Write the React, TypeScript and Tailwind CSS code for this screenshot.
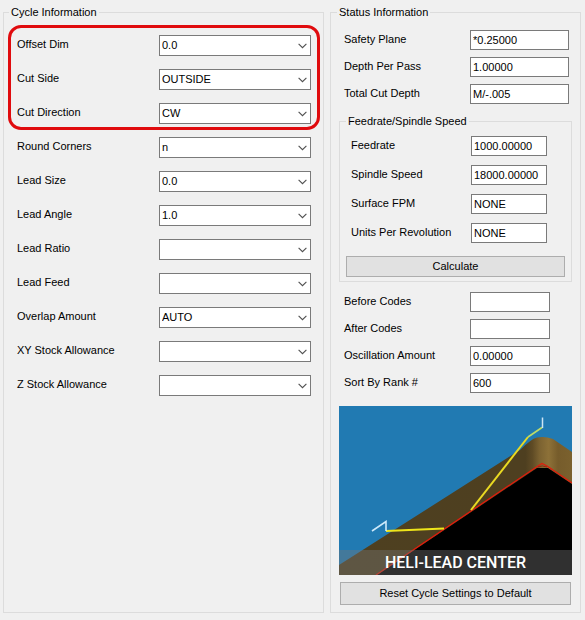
import { ReactNode, useId } from 'react'
import clsx from 'clsx'

type Field = { label: string; value: string }

const highlighted: Field[] = [
  { label: 'Offset Dim', value: '0.0' },
  { label: 'Cut Side', value: 'OUTSIDE' },
  { label: 'Cut Direction', value: 'CW' },
]

const cycleFields: Field[] = [
  { label: 'Round Corners', value: 'n' },
  { label: 'Lead Size', value: '0.0' },
  { label: 'Lead Angle', value: '1.0' },
  { label: 'Lead Ratio', value: '' },
  { label: 'Lead Feed', value: '' },
  { label: 'Overlap Amount', value: 'AUTO' },
  { label: 'XY Stock Allowance', value: '' },
  { label: 'Z Stock Allowance', value: '' },
]

const depthFields: Field[] = [
  { label: 'Safety Plane', value: '*0.25000' },
  { label: 'Depth Per Pass', value: '1.00000' },
  { label: 'Total Cut Depth', value: 'M/-.005' },
]

const speedFields: Field[] = [
  { label: 'Feedrate', value: '1000.00000' },
  { label: 'Spindle Speed', value: '18000.00000' },
  { label: 'Surface FPM', value: 'NONE' },
  { label: 'Units Per Revolution', value: 'NONE' },
]

const codeFields: Field[] = [
  { label: 'Before Codes', value: '' },
  { label: 'After Codes', value: '' },
  { label: 'Oscillation Amount', value: '0.00000' },
  { label: 'Sort By Rank #', value: '600' },
]

function GroupBox({ title, className, children }: { title: string; className?: string; children: ReactNode }) {
  return (
    <fieldset className={clsx('min-w-0 border border-[#dcdcdc]', className)}>
      <legend className="px-[2px] leading-[14px]">{title}</legend>
      {children}
    </fieldset>
  )
}

function SelectRow({ label, value }: Field) {
  const id = useId()
  return (
    <div className="flex items-start">
      <label htmlFor={id} className="w-[142px] shrink-0 leading-[18px]">
        {label}
      </label>
      <div className="relative min-w-0 flex-1">
        <select
          id={id}
          defaultValue={value}
          className="block h-[21px] w-full appearance-none border border-[#7a7a7a] bg-white pr-5 pb-[1px] pl-[2px] leading-[18px]"
        >
          <option value={value}>{value}</option>
        </select>
        <svg
          viewBox="0 0 9 6"
          className="pointer-events-none absolute top-2 right-1 h-[6px] w-[9px]"
          fill="none"
          stroke="#505050"
          strokeWidth="1.1"
        >
          <path d="M0.6 0.8 4.5 4.7 8.4 0.8" />
        </svg>
      </div>
    </div>
  )
}

function InputRow({ label, value, labelClass }: Field & { labelClass: string }) {
  const id = useId()
  return (
    <div className="flex items-start">
      <label htmlFor={id} className={clsx('shrink-0 leading-[18px]', labelClass)}>
        {label}
      </label>
      <input
        id={id}
        type="text"
        defaultValue={value}
        className="h-5 min-w-0 flex-1 border border-[#7a7a7a] bg-white px-[2px] leading-[18px]"
      />
    </div>
  )
}

function LeadPreview() {
  return (
    <figure className="relative mt-[13px] overflow-hidden">
      <svg viewBox="0 0 233 169" className="block w-full" fill="none">
        <defs>
          <linearGradient id="wall" gradientUnits="userSpaceOnUse" x1="0" y1="0" x2="233" y2="0">
            <stop offset="0" stopColor="#4e4020" />
            <stop offset="0.8" stopColor="#4e3f20" />
            <stop offset="0.83" stopColor="#5f4b25" />
            <stop offset="0.86" stopColor="#7b6231" />
            <stop offset="0.9" stopColor="#8d7138" />
            <stop offset="0.94" stopColor="#765c2b" />
            <stop offset="1" stopColor="#7b612e" />
          </linearGradient>
        </defs>
        <rect width="233" height="169" fill="#217ab2" />
        <path d="M0 159 181 44Q192 33 198 31.500Q206 30 214 33L233 46V169H0Z" fill="url(#wall)" />
        <path d="M38 169 198 62H209L233 78V169Z" fill="#000" />
        <path d="M37 169 199 60 203 57.500 208 60 233 77" stroke="#e01c0c" strokeWidth="1.300" />
        <path d="M199 61Q203 59 208 61" stroke="#8b2a12" />
        <path d="M47 125 105 122.500" stroke="#efe51a" strokeWidth="2" />
        <path d="M33 125 47 115.500V125" stroke="#cde9fa" strokeWidth="1.600" />
        <path d="M132 104 189 31" stroke="#eada22" strokeWidth="2" />
        <path d="M189 31 203 21.500" stroke="#bddb69" strokeWidth="1.700" />
        <path d="M203.500 22V11.500" stroke="#cce5f5" strokeWidth="1.500" />
      </svg>
      <figcaption className="absolute inset-x-0 bottom-0 h-[25px] bg-[#777777]/40 text-center font-['Roboto',sans-serif] text-base leading-[25px] font-medium text-white">
        HELI-LEAD CENTER
      </figcaption>
    </figure>
  )
}

export default function App() {
  return (
    <main className="grid min-h-screen grid-cols-[minmax(0,1fr)_251px] content-start gap-[6px] bg-[#f0f0f0] pt-[5px] pr-1 pl-[3px] font-['Liberation_Sans',sans-serif] text-[11px] text-black">
      <GroupBox title="Cycle Information" className="pr-[3px] pl-1 [&>legend]:ml-[1px]">
        <div className="mt-[6px] flex flex-col gap-[13px] rounded-[13px] border-3 border-[#e00b0e] px-[6px] pt-[7px] pb-[3px]">
          {highlighted.map((field) => (
            <SelectRow key={field.label} {...field} />
          ))}
        </div>
        <div className="mt-[7px] flex flex-col gap-[13px] px-[9px]">
          {cycleFields.map((field) => (
            <SelectRow key={field.label} {...field} />
          ))}
        </div>
      </GroupBox>

      <GroupBox title="Status Information" className="px-2 pb-[7px] [&>legend]:-ml-[2px]">
        <div className="flex flex-col gap-[7px] pt-[11px] pr-[3px] pl-[5px]">
          {depthFields.map((field) => (
            <InputRow key={field.label} {...field} labelClass="w-[126px]" />
          ))}
        </div>

        <GroupBox title="Feedrate/Spindle Speed" className="mt-[10px] px-[6px] pb-1">
          <div className="flex flex-col gap-[9px] pt-2 pr-[18px] pl-[5px]">
            {speedFields.map((field) => (
              <InputRow key={field.label} {...field} labelClass="w-[120px]" />
            ))}
          </div>
          <button type="button" className="mt-[13px] block h-[21px] w-full border border-[#adadad] bg-[#e1e1e1]">
            Calculate
          </button>
        </GroupBox>

        <div className="mt-[10px] flex flex-col gap-[7px] pr-[22px] pl-[5px]">
          {codeFields.map((field) => (
            <InputRow key={field.label} {...field} labelClass="w-[126px]" />
          ))}
        </div>

        <LeadPreview />

        <div className="px-[1px] pt-[7px]">
          <button type="button" className="block h-[23px] w-full border border-[#adadad] bg-[#e1e1e1]">
            Reset Cycle Settings to Default
          </button>
        </div>
      </GroupBox>
    </main>
  )
}
